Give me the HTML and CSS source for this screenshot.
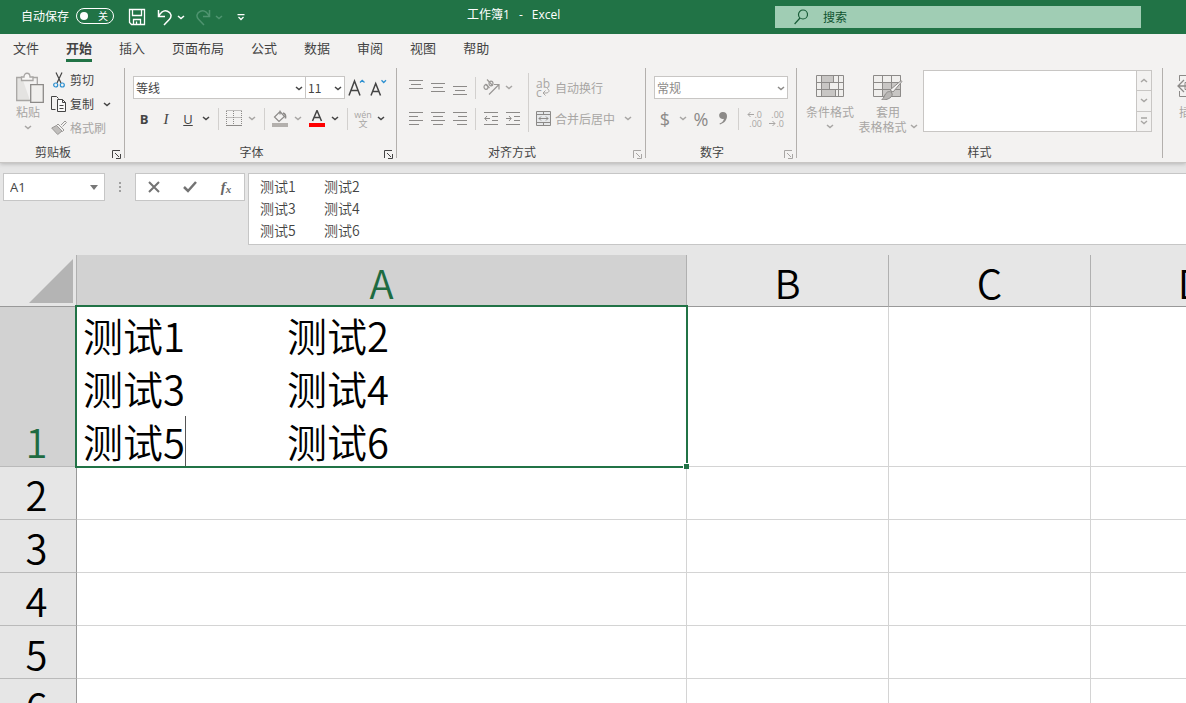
FILE: index.html
```
<!DOCTYPE html>
<html lang="zh-CN">
<head>
<meta charset="utf-8">
<title>工作簿1 - Excel</title>
<link rel="stylesheet" href="styles.css">
</head>
<body>
<svg class="defs" aria-hidden="true">
  <symbol id="chev" viewBox="0 0 8 5"><path d="M1 1l3 2.6L7 1" fill="none" stroke="currentColor" stroke-width="1.5"/></symbol>
  <symbol id="launch" viewBox="0 0 9 9"><path d="M.5 8V.5H8M3 3l4 4M8.5 4v4.500H4" fill="none" stroke="currentColor"/></symbol>
</svg>

<header class="titlebar">
  <div class="quick">
    <label class="autosave" for="autosave">自动保存
      <span class="switch"><input type="checkbox" id="autosave"><span class="knob"></span><span class="off">关</span></span>
    </label>
    <button class="q save" aria-label="保存"><svg width="18" height="18" viewBox="0 0 18 18" fill="none" stroke="currentColor" stroke-width="1.3"><path d="M1.500 1.500h15v15h-13l-2-2zM4.500 1.500v6h9v-6M5.500 16.500v-5h7v5M8.500 13.500v3"/></svg></button>
    <button class="q" aria-label="撤消"><svg width="16" height="17" viewBox="0 0 16 17" fill="none" stroke="currentColor" stroke-width="1.5"><path d="M1.500 1v6.500H8M1.500 7.500C4 3 7.500 1 10.500 2.200c4 1.600 4.500 5.500 2 8L7 16"/></svg></button>
    <button class="dd" aria-label="撤消列表"><svg class="chev"><use href="#chev"/></svg></button>
    <button class="q dim" aria-label="恢复"><svg width="16" height="17" viewBox="0 0 16 17" fill="none" stroke="currentColor" stroke-width="1.500"><path d="M14.500 1v6.500H8M14.500 7.500C12 3 8.500 1 5.500 2.200c-4 1.600-4.500 5.500-2 8L9 16"/></svg></button>
    <button class="dd dim" aria-label="恢复列表"><svg class="chev"><use href="#chev"/></svg></button>
    <button class="q more" aria-label="自定义快速访问工具栏"><svg width="8" height="7" viewBox="0 0 8 7" fill="none" stroke="currentColor" stroke-width="1.300"><path d="M.5.7h7M1.500 3l2.500 2.500L6.500 3"/></svg></button>
  </div>
  <div class="doc"><span>工作簿1</span><span>-</span><span>Excel</span></div>
  <label class="search" for="search">
    <svg width="14" height="16" viewBox="0 0 14 16" fill="none" stroke="currentColor" stroke-width="1.200"><circle cx="9" cy="5.500" r="4.500"/><path d="M6 9L.6 15"/></svg>
    <input type="text" id="search" placeholder="搜索" aria-label="搜索">
  </label>
</header>

<nav class="tabs">
  <a href="#">文件</a><a href="#" class="on">开始</a><a href="#">插入</a><a href="#">页面布局</a><a href="#">公式</a><a href="#">数据</a><a href="#">审阅</a><a href="#">视图</a><a href="#">帮助</a>
</nav>

<main class="ribbon">
  <section class="group clip">
    <div class="body">
      <button class="big paste off-state">
        <svg width="28" height="32" viewBox="0 0 28 32" fill="none" stroke="#a8a6a4" stroke-width="1.300"><path d="M6 5.500H.7v23H14" fill="#e4e3e1"/><path d="M16 5.500h5.300V12"/><path d="M5.500 8.500V5H8c0-5 6-5 6 0h3v3.500z" fill="#f8f7f6"/><path d="M14.700 12.700h12.600v17.600H14.700z" fill="#f0efed" stroke="#8c8a88"/></svg>
        <span>粘贴</span><svg class="chev"><use href="#chev"/></svg>
      </button>
      <div class="stack">
        <button class="line"><svg width="16" height="16" viewBox="0 0 16 16" fill="none" stroke-width="1.200"><path d="M5 .5l5 10.500M11 .5L6 11" stroke="#444"/><circle cx="4.700" cy="13" r="2" stroke="#2b8fd0"/><circle cx="11.300" cy="13" r="2" stroke="#2b8fd0"/></svg>剪切</button>
        <button class="line"><svg width="16" height="16" viewBox="0 0 16 16" fill="none" stroke="#444"><path d="M4.500 13.500h-4V.5h5l2 2"/><path d="M6.500 3.500h5l3 3v9h-8z" fill="#fafafa"/><path d="M11.500 3.500v3h3M8.500 9.500h4M8.500 12.500h4"/></svg>复制<svg class="chev gap"><use href="#chev"/></svg></button>
        <button class="line off-state"><svg width="16" height="16" viewBox="0 0 16 16" fill="none" stroke="#9a9896"><path d="M10 5l4-4 1.500 1.500-4 4M7 4l6 6-1.500 1.500-6-6z"/><path d="M5.500 5.500L.7 8l6 6.500L11 11z" fill="#c0bebc"/></svg>格式刷</button>
      </div>
    </div>
    <footer><span>剪贴板</span><button class="launch" aria-label="剪贴板设置"><svg width="9" height="9"><use href="#launch"/></svg></button></footer>
  </section>

  <section class="group font">
    <div class="body rows">
      <div class="row">
        <span class="pick wide"><select aria-label="字体"><option>等线</option></select><svg class="chev"><use href="#chev"/></svg></span><span class="pick size"><select aria-label="字号"><option>11</option></select><svg class="chev"><use href="#chev"/></svg></span>
        <button class="t" aria-label="增大字号"><svg width="17" height="17" viewBox="0 0 17 17" fill="none"><path d="M1 16.500L6.500 2 12 16.500M3 11.500h7" stroke="#444" stroke-width="1.500"/><path d="M12 3.500L14.200 1.300 16.500 3.500" stroke="#2b8fd0" stroke-width="1.300"/></svg></button>
        <button class="t" aria-label="减小字号"><svg width="17" height="17" viewBox="0 0 17 17" fill="none"><path d="M1 16.500L5.700 4.500 10.500 16.500M2.500 12.500h6" stroke="#444" stroke-width="1.500"/><path d="M11.500 1.300l2.200 2.200 2.300-2.200" stroke="#2b8fd0" stroke-width="1.300"/></svg></button>
      </div>
      <div class="row">
        <button class="t"><b>B</b></button><button class="t"><i>I</i></button><button class="t"><u>U</u></button><button class="dd" aria-label="下划线样式"><svg class="chev"><use href="#chev"/></svg></button>
        <span class="sep"></span>
        <button class="t" aria-label="边框"><svg width="16" height="17" viewBox="0 0 16 17" fill="none" stroke="#8c8a88"><path d="M.5.5h15M.5 7.500h15M.5 1v13M7.500 1v13M15.500 1v13" stroke-dasharray="1 1"/><path d="M0 15.500h16"/></svg></button><button class="dd off-state" aria-label="边框样式"><svg class="chev"><use href="#chev"/></svg></button>
        <span class="sep"></span>
        <button class="t" aria-label="填充颜色"><svg width="16" height="17" viewBox="0 0 16 17" fill="none" stroke="#8c8a88" stroke-width="1.200"><path d="M8 .5v4M8 1.500l4.500 5L7 11.500 2.500 7z"/><path d="M11 3c2.500.5 3 2 2.500 5.500" stroke-width="1.600"/><path d="M0 13h16v4H0z" fill="#b3b0ad" stroke="none"/></svg></button><button class="dd off-state" aria-label="填充颜色列表"><svg class="chev"><use href="#chev"/></svg></button>
        <button class="t ink" aria-label="字体颜色"><svg width="16" height="17" viewBox="0 0 16 17" fill="none"><path d="M3.500 11L8 .5 12.500 11M5 7.500h6" stroke="#444" stroke-width="1.500"/><path d="M0 13h16v4H0z" fill="#f00"/></svg></button><button class="dd" aria-label="字体颜色列表"><svg class="chev"><use href="#chev"/></svg></button>
        <span class="sep"></span>
        <button class="t pinyin off-state"><span>wén</span><span>文</span></button><button class="dd" aria-label="拼音列表"><svg class="chev"><use href="#chev"/></svg></button>
      </div>
    </div>
    <footer><span>字体</span><button class="launch" aria-label="字体设置"><svg width="9" height="9"><use href="#launch"/></svg></button></footer>
  </section>

  <section class="group align off-state">
    <div class="body split">
      <div class="rows">
        <div class="row">
          <button class="t" aria-label="顶端对齐"><svg class="al"><path d="M0 .5h14M2 4.500h10M0 8.500h14"/></svg></button><button class="t" aria-label="垂直居中"><svg class="al"><path d="M0 3.500h14M2 7.500h10M0 11.500h14"/></svg></button><button class="t" aria-label="底端对齐"><svg class="al"><path d="M0 6.500h14M2 10.500h10M0 14.500h14"/></svg></button>
          <span class="sep"></span>
          <button class="t" aria-label="方向"><svg width="17" height="17" viewBox="0 0 17 17" fill="none" stroke="#9a9896" stroke-width="1.200"><path d="M6 15.500L15.500 6M11 5.500h5v5"/><ellipse cx="3" cy="8" rx="2" ry="2.300"/><path d="M2.500 5l4 4"/><ellipse cx="8" cy="4.500" rx="2" ry="2.300"/><path d="M4 .5l5.500 6"/></svg></button><button class="dd" aria-label="方向列表"><svg class="chev"><use href="#chev"/></svg></button>
        </div>
        <div class="row">
          <button class="t" aria-label="左对齐"><svg class="al"><path d="M0 1.500h14M0 5.500h9M0 9.500h14M0 13.500h10"/></svg></button><button class="t" aria-label="居中"><svg class="al"><path d="M0 1.500h14M2 5.500h10M0 9.500h14M2 13.500h10"/></svg></button><button class="t" aria-label="右对齐"><svg class="al"><path d="M0 1.500h14M5 5.500h9M0 9.500h14M4 13.500h10"/></svg></button>
          <span class="sep"></span>
          <button class="t" aria-label="减少缩进量"><svg class="al"><path d="M0 1.500h14M8 5.500h6M8 9.500h6M0 13.500h14M.8 7.500H6M3 5L.8 7.500 3 10"/></svg></button><button class="t" aria-label="增加缩进量"><svg class="al"><path d="M0 1.500h14M8 5.500h6M8 9.500h6M0 13.500h14M0 7.500h5M3 5l2.200 2.500L3 10"/></svg></button>
        </div>
      </div>
      <span class="sep tall"></span>
      <div class="rows right">
        <div class="row"><button class="line"><span class="wrapicon"><span>ab</span><span>c<svg width="8" height="8" viewBox="0 0 8 8" fill="none" stroke="currentColor"><path d="M5 .5c3 1 2.500 4.500-1 4.500H1M3.500 2.500L1 5l2.500 2.500"/></svg></span></span>自动换行</button></div>
        <div class="row"><button class="line"><svg width="16" height="16" viewBox="0 0 16 16" fill="none" stroke="#8c8a88"><path d="M.5.5h14v14H.5z" fill="#e6e8ea"/><path d="M.5 3.500h14M.5 11.500h14M7.500.5v3M7.500 11.500v3M3 7.500h9M5 5.500l-2 2 2 2M10 5.500l2 2-2 2"/></svg>合并后居中<svg class="chev gap"><use href="#chev"/></svg></button></div>
      </div>
    </div>
    <footer><span>对齐方式</span><button class="launch" aria-label="对齐设置"><svg width="9" height="9"><use href="#launch"/></svg></button></footer>
  </section>

  <section class="group number off-state">
    <div class="body rows">
      <div class="row"><span class="pick full"><select aria-label="数字格式"><option>常规</option></select><svg class="chev"><use href="#chev"/></svg></span></div>
      <div class="row">
        <button class="t sym">$</button><button class="dd" aria-label="货币列表"><svg class="chev"><use href="#chev"/></svg></button><button class="t sym">%</button><button class="t" aria-label="千位分隔样式"><svg width="10" height="15" viewBox="0 0 10 15"><path d="M5 1a3.500 3.500 0 1 0 1 6.700C5.500 10 4 11.500 1.500 12.500l.5 1C6.500 12 9 9 9 5c0-2.500-1.700-4-4-4z" fill="#8c8a88"/></svg></button>
        <span class="sep"></span>
        <button class="t dec" aria-label="增加小数位数"><span><svg width="7" height="7" viewBox="0 0 7 7" fill="none" stroke="currentColor"><path d="M7 3.500H1M3.500 1L1 3.500 3.500 6"/></svg>.0</span><span>.00</span></button><button class="t dec" aria-label="减少小数位数"><span>.00</span><span><svg width="7" height="7" viewBox="0 0 7 7" fill="none" stroke="currentColor"><path d="M0 3.500h6M3.500 1L6 3.500 3.500 6"/></svg>.0</span></button>
      </div>
    </div>
    <footer><span>数字</span><button class="launch" aria-label="数字设置"><svg width="9" height="9"><use href="#launch"/></svg></button></footer>
  </section>

  <section class="group styles off-state">
    <div class="body">
      <button class="big"><svg width="28" height="28" viewBox="0 0 28 28" fill="none" stroke="#8c8a88"><path d="M.5 3.500h27v21H.5z" fill="#f0efed"/><path d="M6 4h11v6H6zM6 11h7v6H6zM6 18h13v6H6z" fill="#c8c6c4" stroke="none"/><path d="M.5 10.500h27M.5 17.500h27M5.500 3.500v21M13.500 10.500v7M17.500 3.500v7M19.500 17.500v7M22.500 3.500v21"/></svg><span>条件格式</span><svg class="chev"><use href="#chev"/></svg></button>
      <button class="big tbl"><svg width="30" height="28" viewBox="0 0 30 28" fill="none" stroke="#8c8a88"><path d="M.5 3.500h27v21H.5z" fill="#f0efed"/><path d="M9 11h19v13H9z" fill="#c8c6c4" stroke="none"/><path d="M.5 10.500h27M.5 17.500h27M9.500 3.500v21M18.500 3.500v21M27.500 3.500v21"/><path d="M28.500 10L20 20l-3-2 10-8.500c1.500-1 2.500-.5 1.500.5z" fill="#f3f2f1"/><path d="M18.500 20.500c3 4-4 8-10 7.500 3-1.500 2.500-6 6-8 1.500-.7 3-.5 4 .5z" fill="#b8b6b4"/></svg><span>套用</span><span class="nowrap">表格格式<svg class="chev"><use href="#chev"/></svg></span></button>
      <div class="gallery"><div class="pane"></div><div class="steps"><button aria-label="上一行"><svg class="chev up"><use href="#chev"/></svg></button><button aria-label="下一行"><svg class="chev"><use href="#chev"/></svg></button><button aria-label="其他"><svg width="8" height="8" viewBox="0 0 8 8" fill="none" stroke="currentColor" stroke-width="1.300"><path d="M1 1h6M1 4l3 2.600L7 4"/></svg></button></div></div>
    </div>
    <footer><span>样式</span></footer>
  </section>

  <section class="group cells off-state">
    <div class="body"><button class="big"><svg width="28" height="28" viewBox="0 0 28 28" fill="none" stroke="#8c8a88"><path d="M2.500 9V3.500h25M2.500 19v5.500h25M2.500 3.500h24v6M27 10.500H8v7h19"/><path d="M14 14H1M7 8l-6 6 6 6" stroke-width="1.300"/></svg><span>插入</span></button></div>
  </section>
</main>

<section class="formula">
  <label class="namebox"><input type="text" value="A1" aria-label="名称框"><svg width="8" height="5" viewBox="0 0 8 5"><path d="M0 0h8L4 5z" fill="#777"/></svg></label>
  <span class="dots"></span>
  <div class="fx">
    <button aria-label="取消"><svg width="12" height="12" viewBox="0 0 12 12" fill="none" stroke="#737373" stroke-width="2"><path d="M1 1l10 10M11 1L1 11"/></svg></button>
    <button aria-label="输入"><svg width="14" height="12" viewBox="0 0 14 12" fill="none" stroke="#737373" stroke-width="2.500"><path d="M1 6l4 4L13 1"/></svg></button>
    <button class="fn" aria-label="插入函数">f<small>x</small></button>
  </div>
  <textarea class="bar" rows="3" aria-label="编辑栏">测试1&#9;测试2
测试3&#9;测试4
测试5&#9;测试6</textarea>
</section>

<div class="sheet">
  <table>
    <colgroup><col class="c-head"><col class="c-a"><col class="c-n"><col class="c-n"><col class="c-n"></colgroup>
    <thead><tr>
      <th class="corner"><svg width="44" height="44" viewBox="0 0 44 44"><path d="M44 0v44H0z" fill="#b4b4b4"/></svg></th>
      <th class="sel">A</th><th>B</th><th>C</th><th>D</th>
    </tr></thead>
    <tbody>
      <tr><th class="sel">1</th><td class="active"><div class="editor" contenteditable="true" role="textbox" aria-multiline="true" aria-label="单元格 A1">测试1&#9;测试2
测试3&#9;测试4
测试5<span class="caret"></span>&#9;测试6</div><span class="handle"></span></td><td></td><td></td><td></td></tr>
      <tr><th>2</th><td></td><td></td><td></td><td></td></tr>
      <tr><th>3</th><td></td><td></td><td></td><td></td></tr>
      <tr><th>4</th><td></td><td></td><td></td><td></td></tr>
      <tr><th>5</th><td></td><td></td><td></td><td></td></tr>
      <tr><th>6</th><td></td><td></td><td></td><td></td></tr>
    </tbody>
  </table>
</div>
</body>
</html>
```

FILE: styles.css
```
* { box-sizing: border-box; }

body {
  margin: 0;
  height: 100vh;
  display: flex;
  flex-direction: column;
  overflow: hidden;
  background: #e6e6e6;
  color: #444;
  font: 12px/16px "Noto Sans CJK SC", sans-serif;
}

button, input, select, textarea {
  margin: 0;
  padding: 0;
  border: 0;
  background: none;
  color: inherit;
  font: inherit;
  outline: none;
}

button { display: flex; align-items: center; justify-content: center; flex: none; }
svg { display: block; flex: none; }
.defs { position: absolute; width: 0; height: 0; }
.chev { width: 8px; height: 5px; }
.al { width: 14px; height: 15px; fill: none; stroke: #8c8a88; }
.off-state { color: #a8a6a4; }

/* title bar */
.titlebar {
  flex: none;
  height: 34px;
  display: grid;
  grid-template-columns: 467px 308px minmax(0, 366px) 1fr;
  align-items: center;
  background: #217346;
  color: #fff;
}
.quick { display: flex; align-items: center; padding-left: 21px; }
.autosave { display: flex; align-items: center; gap: 7px; padding-bottom: 2px; }
.switch {
  position: relative;
  display: flex;
  align-items: center;
  justify-content: space-between;
  width: 38px;
  height: 16px;
  padding: 0 5px 0 3px;
  border: 1px solid #fff;
  border-radius: 8px;
}
.switch input { position: absolute; inset: 0; appearance: none; }
.knob { width: 8px; height: 8px; border-radius: 50%; background: #fff; }
.off { font-size: 10px; line-height: 12px; }
.q { width: 18px; }
.save { margin: 0 10px 0 14px; }
.titlebar .dd { margin-right: 6px; }
.titlebar .dim { color: #4f9470; }
.dd { width: 14px; height: 23px; }
.doc {
  display: flex;
  gap: 9px;
  padding-bottom: 4px;
  font-family: "Open Sans", "Noto Sans CJK SC", sans-serif;
}
.search {
  display: flex;
  align-items: center;
  gap: 15px;
  height: 22px;
  padding-left: 19px;
  background: #a0cdb4;
  color: #185c37;
}
.search input { flex: 1; min-width: 0; }
.search input::placeholder { color: #0f5430; opacity: 1; }

/* tabs */
.tabs {
  flex: none;
  display: flex;
  gap: 27px;
  height: 32px;
  padding: 4px 13px;
  background: #f3f2f1;
}
.tabs a {
  height: 24px;
  color: #444;
  font-size: 13px;
  line-height: 20px;
  text-decoration: none;
  white-space: nowrap;
}
.tabs .on { border-bottom: 3px solid #217346; font-weight: 700; }

/* ribbon */
.ribbon {
  flex: none;
  display: flex;
  height: 97px;
  padding: 2px 0 4px;
  overflow: hidden;
  background: #f3f2f1;
  border-bottom: 1px solid #c8c6c4;
  box-shadow: 0 1px 4px #b4b4b4;
  clip-path: inset(0 0 -6px);
}
.group {
  flex: none;
  display: flex;
  flex-direction: column;
  justify-content: space-between;
  border-right: 1px solid #b3b0ad;
}
.body { display: flex; }
.group footer { display: flex; height: 14px; color: #444; }
.group footer span { flex: 1; text-align: center; line-height: 16px; }
.launch { width: 18px; height: 14px; padding: 6px 0 0 2px; }
.align .launch, .number .launch { color: #a8a6a4; }
.clip { width: 125px; }
.font { width: 272px; }
.align { width: 249px; }
.number { width: 151px; }
.styles { width: 366px; }
.cells { width: 80px; border: 0; }
.body.rows, .split > .rows:first-child { padding-left: 8px; }
.rows { display: flex; flex-direction: column; gap: 8px; padding-top: 8px; }
.row { display: flex; align-items: center; height: 23px; }

.big { flex-direction: column; justify-content: flex-start; }
.big > span { line-height: 15px; }
.big > .chev { margin-top: 5px; }
.paste { padding: 4px 0 0 16px; align-items: flex-start; }
.paste > span { line-height: 16px; }
.paste > .chev { margin-left: 8px; }
.stack { display: flex; flex-direction: column; padding-left: 7px; }
.line { gap: 3px; height: 24px; justify-content: flex-start; white-space: nowrap; }
.gap { margin-left: 6px; }

.t { width: 22px; height: 23px; font: 14px/20px "Open Sans", sans-serif; }
.t b, .t i, .t u { font-size: 13px; }
.t i { font-family: "Liberation Serif", serif; font-size: 15px; }
.sep { flex: none; width: 1px; height: 22px; margin: 0 4px; background: #d2d0ce; }
.font .sep { margin-left: 5px; }
.ink { margin-left: 1px; }
.tall { height: 59px; margin-top: 5px; }
.right { padding-left: 3px; }
.pick {
  position: relative;
  display: flex;
  height: 23px;
  border: 1px solid #c8c6c4;
  background: #fff;
}
.pick select { width: 100%; padding-left: 2px; appearance: none; }
.pick .chev { position: absolute; right: 2px; top: 9px; pointer-events: none; }
.wide { width: 173px; }
.size { width: 40px; margin-left: -1px; }
.full { width: 134px; color: #8c8a88; }
.pinyin { flex-direction: column; font-size: 9px; line-height: 9px; font-family: "Open Sans", "Noto Sans CJK SC", sans-serif; }
.wrapicon { width: 16px; font: 12px/9px "Open Sans", sans-serif; }
.wrapicon span { display: flex; }
.sym { font-size: 18px; color: #8c8a88; }
.dec { flex-direction: column; align-items: flex-end; padding-right: 3px; font-size: 9px; line-height: 9px; }
.dec span { display: flex; align-items: center; }

.styles .big { width: 56px; padding-top: 4px; margin-left: 5px; }
.styles .big > svg:first-child, .cells .big > svg:first-child { margin-bottom: 4px; }
.styles .tbl { width: 60px; margin-left: 0; }
.styles .big > span { white-space: nowrap; }
.nowrap { display: flex; align-items: center; gap: 3px; }
.gallery { flex: 1; display: flex; height: 62px; margin: 2px 10px 0 5px; border: 1px solid #c8c6c4; background: #fff; }
.pane { flex: 1; }
.steps { display: flex; flex-direction: column; width: 15px; border-left: 1px solid #c8c6c4; background: #f3f2f1; }
.steps button { flex: 1; }
.steps button + button { border-top: 1px solid #c8c6c4; }
.up { transform: rotate(180deg); }
.cells .big { padding: 4px 0 0 14px; }

/* formula bar */
.formula { flex: none; display: flex; align-items: flex-start; padding: 10px 0; }
.namebox {
  display: flex;
  align-items: center;
  width: 102px;
  height: 28px;
  margin-left: 3px;
  padding: 0 6px;
  border: 1px solid #c6c6c6;
  background: #fff;
}
.namebox input { flex: 1; min-width: 0; font: 13px/16px "Open Sans", sans-serif; }
.dots {
  width: 2px;
  height: 10px;
  margin: 9px 14px;
  background: repeating-linear-gradient(#a0a0a0 0 2px, transparent 2px 4px);
}
.fx { display: flex; width: 110px; height: 28px; border: 1px solid #c6c6c6; background: #fff; }
.fx button { flex: 1; }
.fx .fn { color: #666; font: italic bold 15px/20px "Liberation Serif", serif; }
.fn small { font-size: 11px; line-height: 12px; padding-top: 4px; }
.bar {
  flex: 1;
  min-width: 0;
  height: 72px;
  margin-left: 3px;
  padding: 1px 11px;
  overflow: hidden;
  resize: none;
  border: 1px solid #c6c6c6;
  border-right: 0;
  background: #fff;
  font-size: 14px;
  font-weight: 350;
  line-height: 22px;
  tab-size: 64px;
}

/* sheet */
.sheet { flex: 1; min-height: 0; overflow: hidden; background: #fff; }
table {
  width: 100%;
  table-layout: fixed;
  border-collapse: separate;
  border-spacing: 0;
  color: #000;
  font-size: 40px;
}
.c-head { width: 77px; }
.c-a { width: 610px; }
.c-n { width: 202px; }
th {
  height: 53px;
  padding: 3px 3px 0 0;
  background: #e6e6e6;
  border-right: 1px solid #999;
  border-bottom: 1px solid #bababa;
  font-weight: 350;
  line-height: 49px;
}
thead th {
  height: 52px;
  padding: 3px 0 0;
  line-height: 48px;
  border-color: #999;
  border-right-color: #b0b0b0;
}
th.sel { background: #d2d2d2; color: #1e6b41; vertical-align: bottom; }
th.corner { padding: 0 3px 0 0; }
.corner svg { margin-left: auto; }
td { padding: 0; border-right: 1px solid #d4d4d4; border-bottom: 1px solid #d4d4d4; }
.active { position: relative; vertical-align: top; }
.active::after {
  content: "";
  position: absolute;
  inset: -2px;
  border: 2px solid #217346;
  pointer-events: none;
}
.editor {
  height: 159px;
  padding: 2px 0 0 6px;
  font-weight: 350;
  line-height: 53px;
  white-space: pre;
  tab-size: 204px;
  outline: none;
}
.caret {
  display: inline-block;
  width: 1px;
  height: 50px;
  margin: 1px -1px 0 0;
  vertical-align: top;
  background: #555;
}
.handle {
  position: absolute;
  right: -3px;
  bottom: -3px;
  z-index: 1;
  width: 6px;
  height: 6px;
  border: 1px solid #fff;
  border-width: 1px 0 0 1px;
  background: #217346;
}
```
